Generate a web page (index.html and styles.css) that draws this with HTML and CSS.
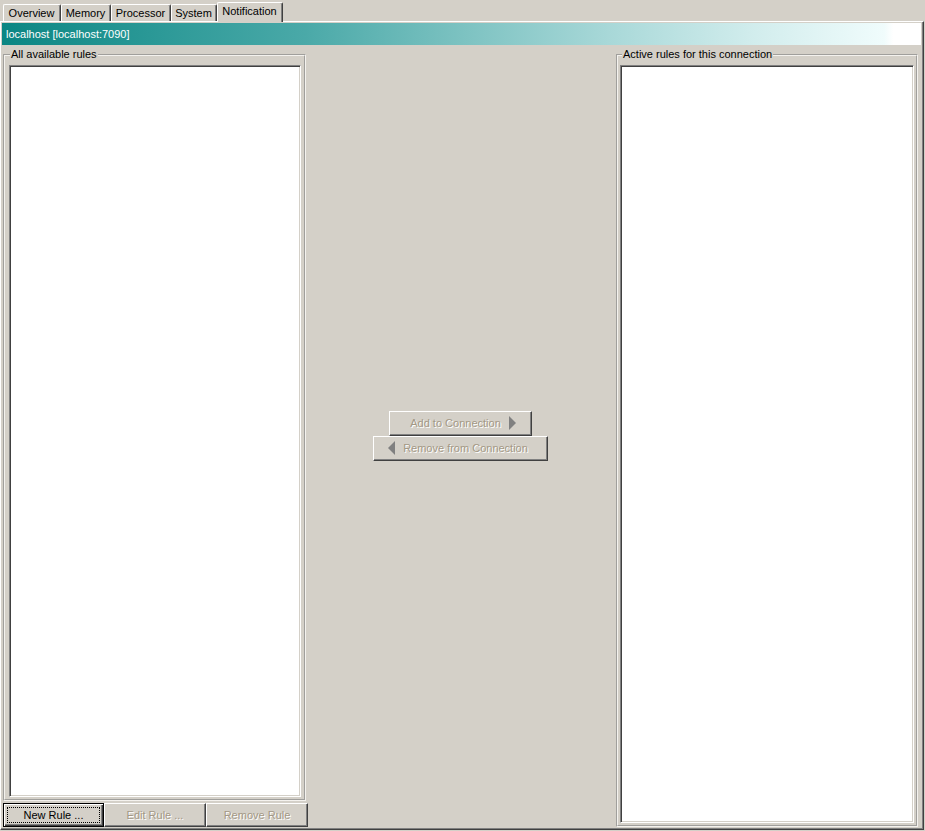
FILE: index.html
```
<html>
  <head>
    <title>Notification</title>
    <link rel="stylesheet" href="styles.css">
  </head>
<body>
  <div class="tabs">
    <div class="tab overview">Overview</div>
    <div class="tab memory">Memory</div>
    <div class="tab processor">Processor</div>
    <div class="tab system">System</div>
    <div class="tab notification selected">Notification</div>
  </div>
  <div class="panel">
    <div class="header">localhost [localhost:7090]</div>
    <div class="content">
      <div class="left">
        <fieldset class="group">
          <legend>All available rules</legend>
          <div class="list"></div>
        </fieldset>
        <div class="rule-buttons">
          <button class="btn focus"><span>New Rule ...</span></button>
          <button class="btn" disabled>Edit Rule ...</button>
          <button class="btn" disabled>Remove Rule</button>
        </div>
      </div>
      <div class="middle">
        <button class="btn move add" disabled>Add to Connection <i class="arrow right"></i></button>
        <button class="btn move remove" disabled><i class="arrow left"></i> Remove from Connection</button>
      </div>
      <div class="right">
        <fieldset class="group">
          <legend>Active rules for this connection</legend>
          <div class="list"></div>
        </fieldset>
      </div>
    </div>
  </div>
</body>
</html>
```
FILE: styles.css
```
html, body { margin:0; background:#d4d0c8; }
body
{
  width:925px;
  height:831px;
  overflow:hidden;
  font: 11px "Liberation Sans", Arial, sans-serif;
  color:#000;
}

/* tab strip */
.tabs
{
  display:flex;
  height:21px;
  padding-left:3px;
  align-items:flex-end;
}
.tab
{
  box-sizing:border-box;
  height:17px;
  line-height:17px;
  text-align:center;
  padding-right:1px;
  border-top:1px solid #fff;
  border-left:1px solid #fff;
  border-right:1px solid #404040;
  box-shadow: inset -1px 0 #808080;
  border-radius:2px 2px 0 0;
}
.tab.overview { width:58px; }
.tab.memory { width:50px; }
.tab.processor { width:60px; }
.tab.system { width:46px; }
.tab.notification { width:66px; }
.tab.selected
{
  height:20px;
  line-height:16px;
  position:relative;
  top:1px;
  background:#d4d0c8;
  z-index:1;
}

/* tab page */
.panel
{
  width:916px;
  height:804px;
  border-top:1px solid #fff;
  border-left:1px solid #fff;
  border-right:1px solid #404040;
  border-bottom:1px solid #404040;
  box-shadow: inset -1px -1px #808080;
  padding:1px 5px 2px 1px;
  display:flex;
  flex-direction:column;
}
.header
{
  height:22px;
  line-height:22px;
  padding-left:4px;
  margin-right:-3px;
  color:#fff;
  background:linear-gradient(to right, #0b8683 0%, #2a9896 16%, #4aa9a8 33%, #7cc2c1 50%, #a8d8d8 66%, #d2eded 82%, #f0fcfc 96%, #fff 97%);
}
.content
{
  flex:1;
  display:grid;
  grid-template-columns: 305px 1fr 302px;
  padding:3px 0 0 1px;
}

/* group boxes */
.group
{
  margin:0;
  padding:4px 3px 2px 4px;
  border:2px groove #f4f2ee;
  min-width:0;
  display:flex;
}
.group legend
{
  padding:0 1px;
  margin-left:1px;
  line-height:13px;
}
.right .group { padding:4px 2px 2px 2px; }
.right .group legend { margin-left:2px; }
.list
{
  flex:1;
  background:#fff;
  border-top:1px solid #808080;
  border-left:1px solid #808080;
  border-right:1px solid #fff;
  border-bottom:1px solid #fff;
  box-shadow: inset 1px 1px #404040, inset -1px -1px #d4d0c8;
}

.left
{
  display:flex;
  flex-direction:column;
}
.left .group { flex:1; margin-right:2px; }
.right { display:flex; }
.right .group { flex:1; }

/* buttons */
.btn
{
  font: 11px "Liberation Sans", Arial, sans-serif;
  height:24px;
  padding:0;
  background:#d4d0c8;
  color:#000;
  border-top:1px solid #fff;
  border-left:1px solid #fff;
  border-right:1px solid #404040;
  border-bottom:1px solid #404040;
  box-shadow: inset -1px -1px #808080;
  border-radius:0;
}
.btn:disabled
{
  color:#a39885;
  text-shadow:1px 1px #fff;
}
.rule-buttons
{
  display:flex;
  margin-top:2px;
  height:24px;
}
.rule-buttons .btn { width:102px; }
.rule-buttons .btn.focus
{
  width:101px;
  border:1px solid #000;
  box-shadow: inset 1px 1px #fff, inset -1px -1px #404040, inset -2px -2px #808080;
  display:flex;
  padding:3px;
}
.btn.focus span
{
  flex:1;
  border:1px dotted #000;
  line-height:14px;
}

.middle
{
  display:flex;
  flex-direction:column;
  align-items:center;
  justify-content:center;
  padding:0 4px 4px 0;
}
.move
{
  height:25px;
  display:flex;
  align-items:center;
  justify-content:center;
  gap:8px;
}
.move.add { width:143px; padding-left:6px; }
.move.remove { width:175px; padding-right:4px; }
.arrow
{
  width:0;
  height:0;
  border-top:7px solid transparent;
  border-bottom:7px solid transparent;
}
.arrow.right { border-left:7px solid #808080; }
.arrow.left { border-right:7px solid #808080; }
```
